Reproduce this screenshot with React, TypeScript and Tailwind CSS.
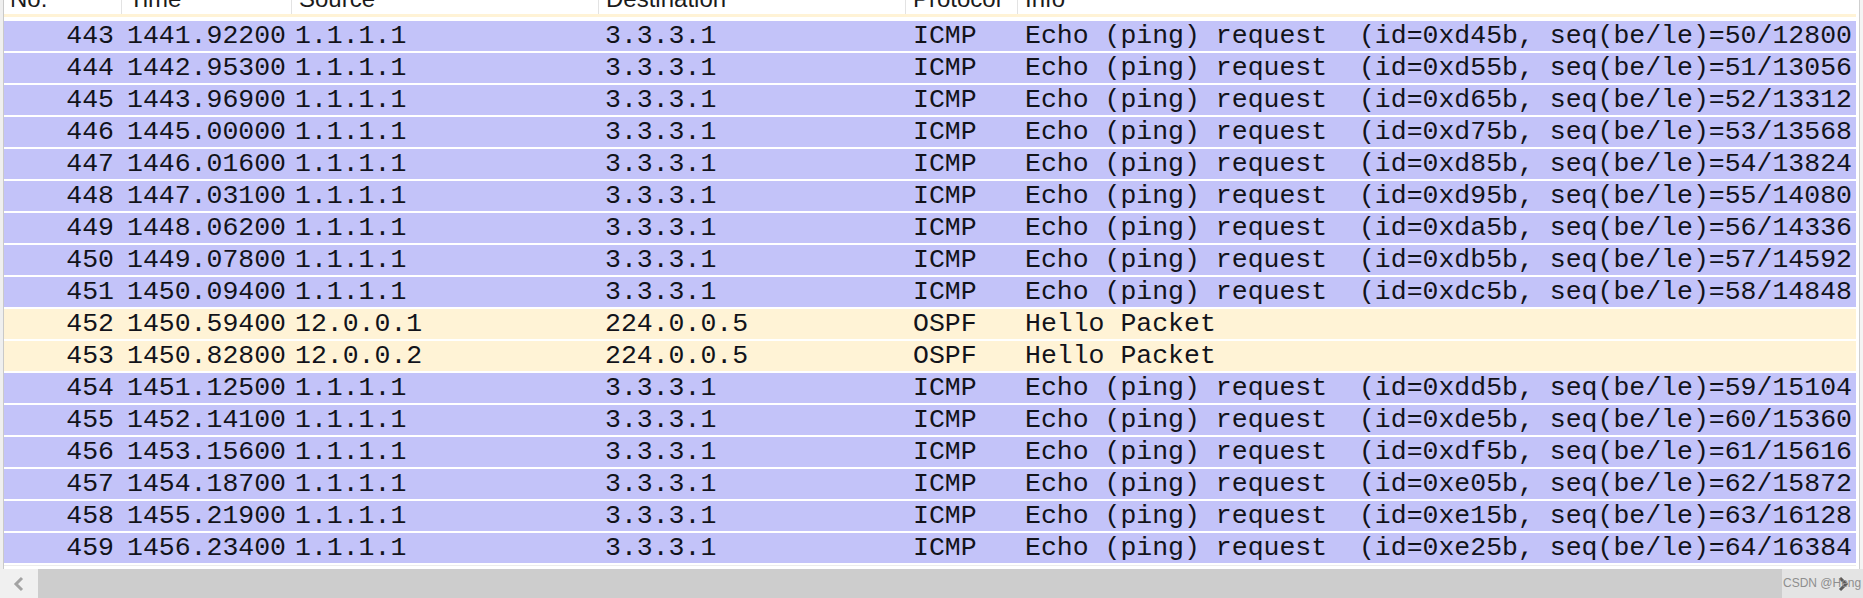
const packets = [
  { no: 443, time: '1441.92200', id: 'd45b', seq: '50/12800' },
  { no: 444, time: '1442.95300', id: 'd55b', seq: '51/13056' },
  { no: 445, time: '1443.96900', id: 'd65b', seq: '52/13312' },
  { no: 446, time: '1445.00000', id: 'd75b', seq: '53/13568' },
  { no: 447, time: '1446.01600', id: 'd85b', seq: '54/13824' },
  { no: 448, time: '1447.03100', id: 'd95b', seq: '55/14080' },
  { no: 449, time: '1448.06200', id: 'da5b', seq: '56/14336' },
  { no: 450, time: '1449.07800', id: 'db5b', seq: '57/14592' },
  { no: 451, time: '1450.09400', id: 'dc5b', seq: '58/14848' },
  { no: 452, time: '1450.59400', src: '12.0.0.1', ospf: true },
  { no: 453, time: '1450.82800', src: '12.0.0.2', ospf: true },
  { no: 454, time: '1451.12500', id: 'dd5b', seq: '59/15104' },
  { no: 455, time: '1452.14100', id: 'de5b', seq: '60/15360' },
  { no: 456, time: '1453.15600', id: 'df5b', seq: '61/15616' },
  { no: 457, time: '1454.18700', id: 'e05b', seq: '62/15872' },
  { no: 458, time: '1455.21900', id: 'e15b', seq: '63/16128' },
  { no: 459, time: '1456.23400', id: 'e25b', seq: '64/16384' },
];

const Row = ({ p }: { p: (typeof packets)[number] }) => {
  const ospf = !!p.ospf;
  return (
    <div
      className={`flex h-[30px] mb-[2px] whitespace-pre text-[26.5px] leading-[30px] text-[#12131a] ${
        ospf ? 'bg-[#fff3d6]' : 'bg-[#c3c3f9]'
      }`}
    >
      {/* No. */}
      <div className="w-[117px] shrink-0 pr-[7px] text-right">{p.no}</div>
      {/* Time */}
      <div className="w-[170px] shrink-0 pl-[6px] overflow-hidden">{p.time}</div>
      {/* Source */}
      <div className="w-[307px] shrink-0 pl-[4px] overflow-hidden">{ospf ? p.src : '1.1.1.1'}</div>
      {/* Destination */}
      <div className="w-[307px] shrink-0 pl-[7px] overflow-hidden">{ospf ? '224.0.0.5' : '3.3.3.1'}</div>
      {/* Protocol */}
      <div className="w-[112px] shrink-0 pl-[8px] overflow-hidden">{ospf ? 'OSPF' : 'ICMP'}</div>
      {/* Info */}
      <div className="flex-1 pl-[8px] overflow-hidden">
        {ospf ? 'Hello Packet' : `Echo (ping) request  (id=0x${p.id}, seq(be/le)=${p.seq}`}
      </div>
    </div>
  );
};

const headers = [
  { label: 'No.', w: 'w-[117px] pl-[6px]' },
  { label: 'Time', w: 'w-[170px] pl-[7px]' },
  { label: 'Source', w: 'w-[307px] pl-[7px]' },
  { label: 'Destination', w: 'w-[307px] pl-[7px]' },
  { label: 'Protocol', w: 'w-[112px] pl-[7px]' },
  { label: 'Info', w: 'flex-1 pl-[7px]' },
];

const App = () => {
  return (
    <div
      className="w-[1863px] h-[598px] overflow-hidden bg-white flex flex-col"
      style={{ fontFamily: '"Liberation Mono", monospace' }}
    >
      <div className="flex h-[569px]">
        {/* left pane edge */}
        <div className="w-[3px] bg-[#efefef]" />
        <div className="w-[1px] bg-[#c9c9c9]" />

        {/* packet list */}
        <div className="w-[1852px] flex flex-col">
          <div className="flex h-[14px] overflow-hidden bg-white">
            {headers.map((h, i) => (
              <div
                key={h.label}
                className={`${h.w} shrink-0 h-full ${i > 0 ? 'border-l border-[#e3e3e3]' : ''}`}
              >
                <span
                  className="block -mt-[15px] text-[24px] leading-[28px] text-[#1b1b1b] whitespace-pre"
                  style={{ fontFamily: '"Liberation Sans", Arial, sans-serif' }}
                >
                  {h.label}
                </span>
              </div>
            ))}
          </div>
          <div className="h-[3px] bg-[#fff3d6]" />
          <div className="h-[4px]" />

          {packets.map((p) => (
            <Row key={p.no} p={p} />
          ))}

          <div className="h-[1px] bg-[#ececec]" />
        </div>

        {/* right edge */}
        <div className="w-[3px]" />
        <div className="w-[1px] bg-[#cfcfcf]" />
        <div className="flex-1 bg-[#f4f4f4]" />
      </div>

      {/* horizontal scrollbar */}
      <div className="flex h-[29px] bg-[#cdcdcd]">
        <div className="w-[38px] bg-[#f0f0f0] flex items-center justify-center">
          <svg width="12" height="16" viewBox="0 0 12 16">
            <path d="M9 2 L3 8 L9 14" fill="none" stroke="#a3a3a3" strokeWidth="3" />
          </svg>
        </div>
        <div className="flex-1" />
        <div className="relative w-[81px] bg-[#e4e4e4] flex items-center justify-end pr-[14px]">
          <svg width="12" height="16" viewBox="0 0 12 16">
            <path d="M3 2 L9 8 L3 14" fill="none" stroke="#5a5a5a" strokeWidth="3" />
          </svg>
          <span
            className="absolute left-[1px] top-[7px] text-[12px] leading-[14px] text-[#8e8e8e] whitespace-pre"
            style={{ fontFamily: '"Liberation Sans", Arial, sans-serif' }}
          >
            CSDN @Heng
          </span>
        </div>
      </div>
    </div>
  );
};

export default App;
